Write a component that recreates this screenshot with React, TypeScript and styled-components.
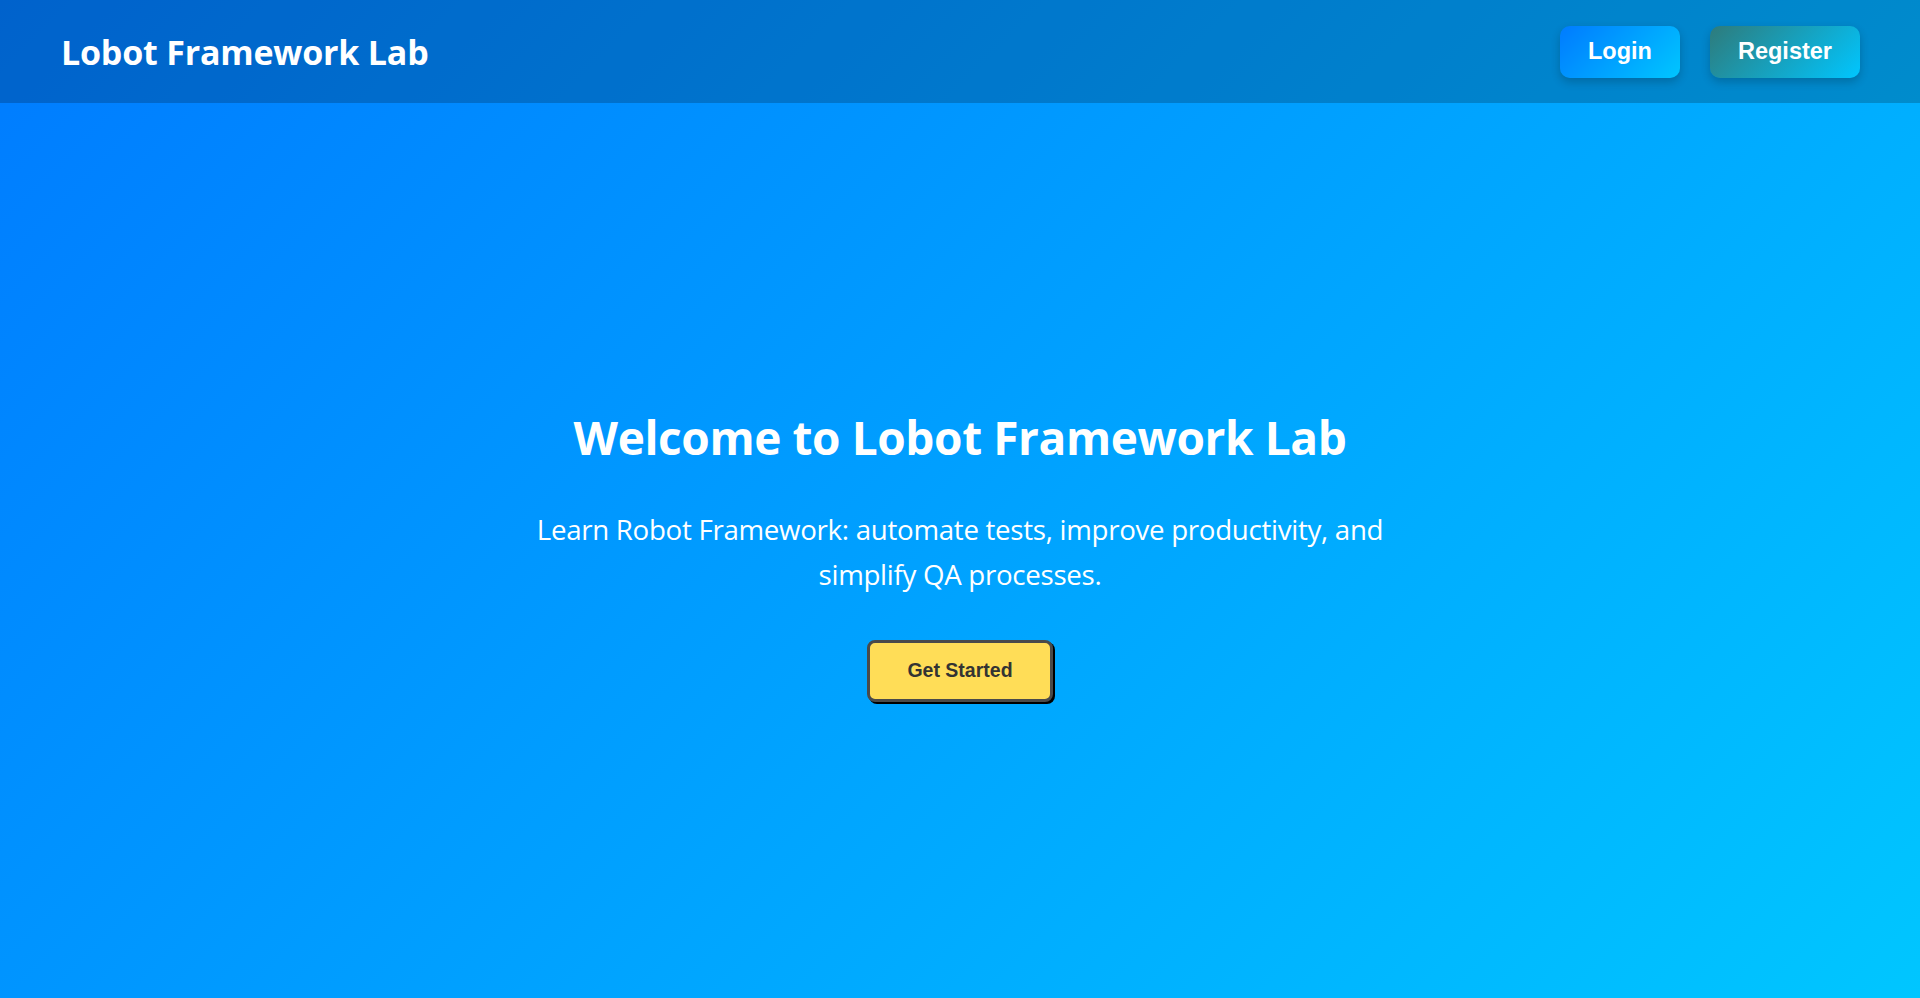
import React from "react";
import styled, { createGlobalStyle } from "styled-components";

const GlobalStyle = createGlobalStyle`
  html, body {
    margin: 0;
    padding: 0;
  }
  body {
    font-family: "Open Sans", "Noto Sans", sans-serif;
    color: #fff;
  }
  * { box-sizing: border-box; }
`;

const Page = styled.div`
  min-height: 100vh;
  display: flex;
  flex-direction: column;
  background: linear-gradient(135deg, #007bff 0%, #00c6ff 100%);
`;

const Header = styled.header`
  height: 103px;
  flex-shrink: 0;
  display: flex;
  align-items: center;
  justify-content: space-between;
  padding: 0 60px 0 61px;
  background: rgba(0, 0, 0, 0.2);
`;

const Brand = styled.h1`
  margin: 0;
  font-family: "Open Sans", sans-serif;
  font-weight: 700;
  font-size: 34px;
  letter-spacing: -0.2px;
  color: #fff;
`;

const Nav = styled.nav`
  display: flex;
  gap: 30px;
  align-items: center;
`;

const NavButton = styled.button<{ $from: string; $to: string }>`
  border: none;
  border-radius: 10px;
  padding: 12px 28px 13px;
  font-family: "Liberation Sans", Arial, sans-serif;
  font-weight: 700;
  font-size: 23.5px;
  line-height: 27px;
  color: #fff;
  cursor: pointer;
  background: linear-gradient(135deg, ${(p) => p.$from}, ${(p) => p.$to});
  box-shadow: 0 4px 10px rgba(0, 0, 0, 0.2);
`;

const Hero = styled.main`
  flex: 1;
  display: flex;
  flex-direction: column;
  align-items: center;
  justify-content: center;
  text-align: center;
  padding: 9px 20px 0;
`;

const Title = styled.h2`
  margin: 0 0 39px;
  font-family: "Open Sans", sans-serif;
  font-weight: 700;
  font-size: 46px;
  letter-spacing: -0.4px;
  line-height: 1.3;
  color: #fff;
`;

const Lead = styled.p`
  margin: 0 0 43px;
  max-width: 880px;
  font-family: "Open Sans", sans-serif;
  font-weight: 400;
  font-size: 27.7px;
  letter-spacing: -0.3px;
  line-height: 45px;
  color: #fff;
`;

const CtaButton = styled.button`
  width: 186px;
  height: 62px;
  border: 3px solid #4a4a4a;
  border-radius: 8px;
  background: #ffdd57;
  color: #333;
  font-family: "Liberation Sans", Arial, sans-serif;
  font-weight: 700;
  font-size: 19.5px;
  cursor: pointer;
  box-shadow: 2px 2px 0 #000;
`;

export default function App() {
  return (
    <>
      <GlobalStyle />
      <Page>
        <Header>
          <Brand>Lobot Framework Lab</Brand>
          <Nav>
            <NavButton $from="#007bff" $to="#00c6ff">Login</NavButton>
            <NavButton $from="#2e7b7b" $to="#00c6ff">Register</NavButton>
          </Nav>
        </Header>
        <Hero>
          <Title>Welcome to Lobot Framework Lab</Title>
          <Lead>
            Learn Robot Framework: automate tests, improve productivity, and
            simplify QA processes.
          </Lead>
          <CtaButton>Get Started</CtaButton>
        </Hero>
      </Page>
    </>
  );
}
